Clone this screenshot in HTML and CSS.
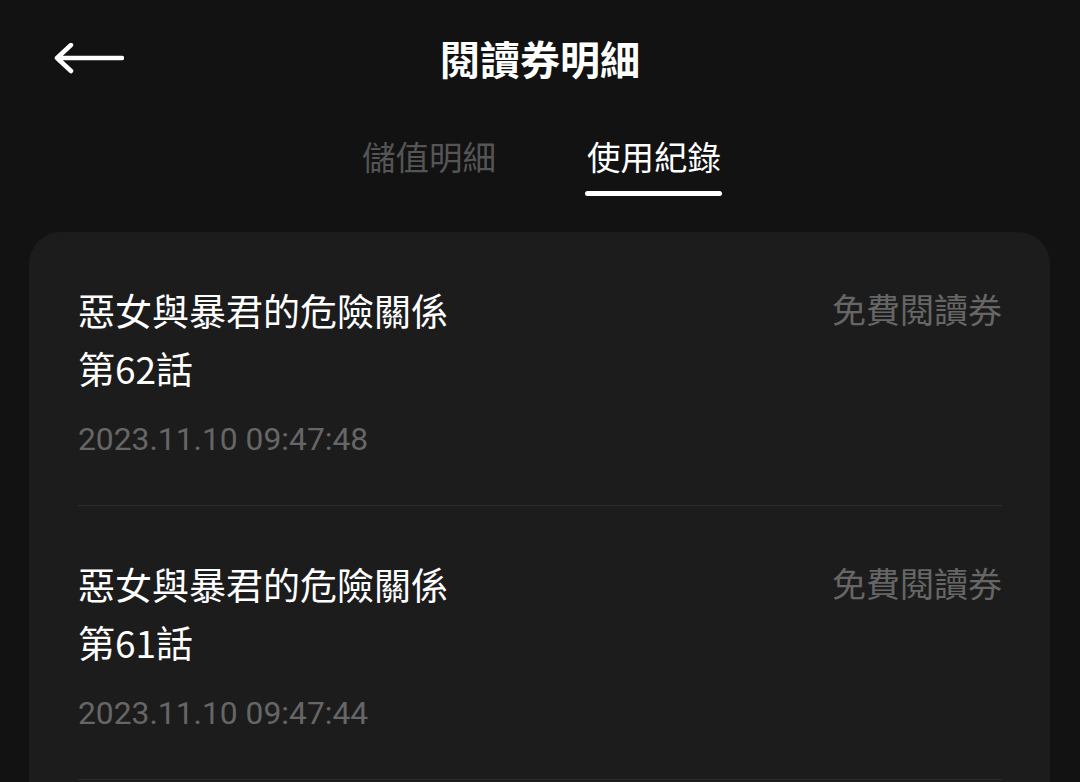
FILE: index.html
```html
<!DOCTYPE html>
<html lang="zh-Hant">
<head>
    <meta charset="UTF-8">
    <meta name="viewport" content="width=device-width, initial-scale=1.0">
    <title>閱讀券明細</title>
    <link rel="stylesheet" href="styles.css">
</head>
<body>

<header class="topbar">
    <button class="back" aria-label="返回">
        <svg width="70" height="32" viewBox="0 0 70 32">
            <path d="M68 15H3M17 2L3 15L17 28" fill="none" stroke="#fff" stroke-width="4.5" stroke-linecap="round" stroke-linejoin="round"/>
        </svg>
    </button>
    <h1>閱讀券明細</h1>
    <span></span>
</header>

<nav class="tabs">
    <a class="tab">儲值明細</a>
    <a class="tab active">使用紀錄</a>
</nav>

<section class="records">
    <!-- Usage records -->
    <div class="record">
        <div class="record-main">
            <div class="record-title">惡女與暴君的危險關係<br>第62話</div>
            <div class="record-date">2023.11.10 09:47:48</div>
        </div>
        <div class="record-type">免費閱讀券</div>
    </div>
    <div class="record">
        <div class="record-main">
            <div class="record-title">惡女與暴君的危險關係<br>第61話</div>
            <div class="record-date">2023.11.10 09:47:44</div>
        </div>
        <div class="record-type">免費閱讀券</div>
    </div>
</section>

</body>
</html>
```

FILE: styles.css
```css
/* General Styles */
body {
    font-family: Roboto, "Noto Sans CJK TC", sans-serif;
    margin: 0;
    padding: 0;
    background-color: #121212;
    color: #fff;
    overflow: hidden;
}
.topbar {
    display: grid;
    grid-template-columns: 1fr auto 1fr;
    align-items: center;
    height: 124px;
    padding: 0 54px;
}
.back {
    background: none;
    border: none;
    padding: 0;
    display: flex;
    margin-top: -6px;
    cursor: pointer;
}
.topbar h1 {
    margin: -8px 0 0;
    font-size: 40px;
    font-weight: bold;
    line-height: 48px;
    font-family: "Noto Sans CJK TC", sans-serif;
}
.tabs {
    display: flex;
    justify-content: center;
    gap: 91px;
    height: 82px;
    padding-left: 3px;
}
.tab {
    font-family: "Noto Sans CJK TC", sans-serif;
    font-size: 33.5px;
    line-height: 48px;
    height: 72px;
    padding-top: 8px;
    box-sizing: border-box;
    color: #555;
    position: relative;
}
.tab.active {
    color: #fff;
}
.tab.active::after {
    content: "";
    position: absolute;
    left: -2px;
    right: -1px;
    bottom: 0;
    height: 5px;
    border-radius: 3px;
    background-color: #fff;
}
.records {
    margin: 26px 30px 0 29px;
    background-color: #1c1c1c;
    border-radius: 32px;
    padding: 0 48px 60px 49px;
}
.record {
    display: flex;
    justify-content: space-between;
    align-items: flex-start;
    padding: 49px 0 46px;
    border-bottom: 1px solid #2c2c2c;
}
.record-title {
    font-family: "Noto Sans CJK TC", sans-serif;
    font-size: 37px;
    line-height: 58px;
    color: #fff;
}
.record-date {
    margin-top: 22px;
    font-size: 31.8px;
    line-height: 40px;
    color: #666;
}
.record-type {
    font-family: "Noto Sans CJK TC", sans-serif;
    font-size: 34px;
    line-height: 56px;
    color: #666;
}
```
